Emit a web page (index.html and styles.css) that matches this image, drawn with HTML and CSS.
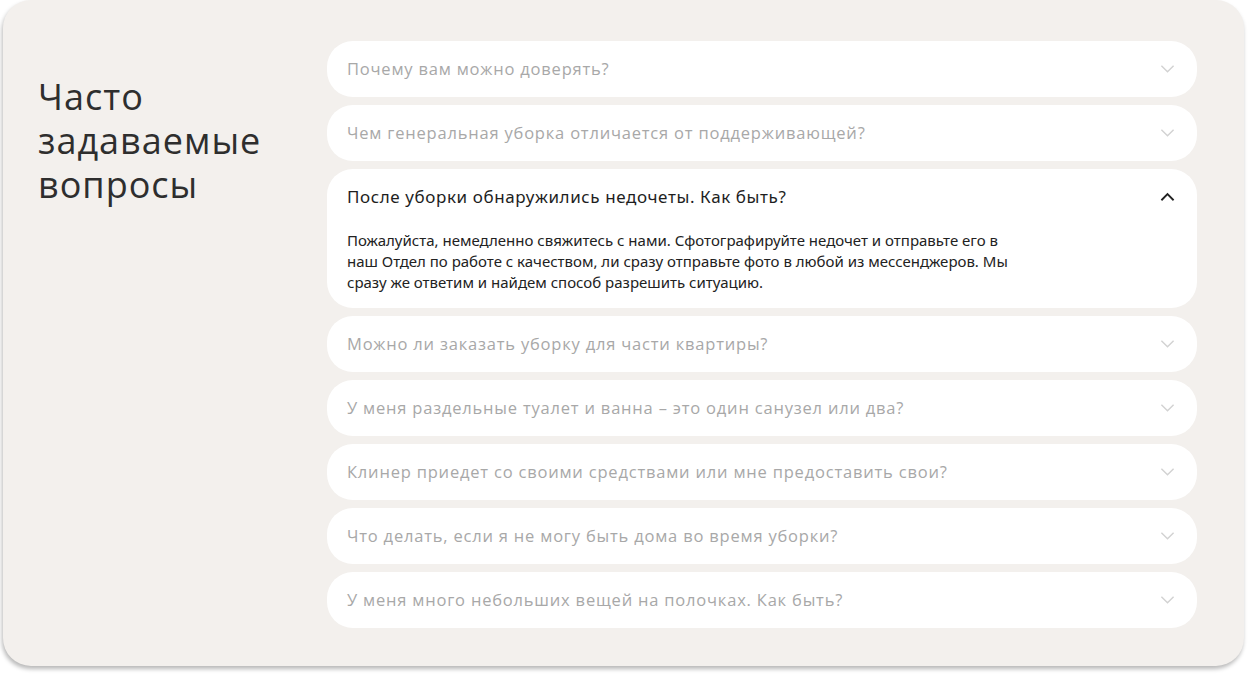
FILE: index.html
```html
<!DOCTYPE html>
<html lang="ru">
<head>
<meta charset="utf-8">
<link rel="stylesheet" href="styles.css">
</head>
<body>
<section class="faq">
  <h2 class="faq-title">Часто<br>задаваемые<br>вопросы</h2>
  <div class="faq-list">
    <div class="item"><div class="q"><span>Почему вам можно доверять?</span><svg class="chev" viewBox="0 0 16 10"><path d="M1.5 1.5 8 8l6.5-6.5"/></svg></div></div>
    <div class="item"><div class="q"><span>Чем генеральная уборка отличается от поддерживающей?</span><svg class="chev" viewBox="0 0 16 10"><path d="M1.5 1.5 8 8l6.5-6.5"/></svg></div></div>
    <div class="item open"><div class="q"><span>После уборки обнаружились недочеты. Как быть?</span><svg class="chev" viewBox="0 0 16 10"><path d="M1.5 8.5 8 2l6.5 6.5"/></svg></div>
      <p class="a">Пожалуйста, немедленно свяжитесь с нами. Сфотографируйте недочет и отправьте его в наш Отдел по работе с качеством, ли сразу отправьте фото в любой из мессенджеров. Мы сразу же ответим и найдем способ разрешить ситуацию.</p></div>
    <div class="item"><div class="q"><span>Можно ли заказать уборку для части квартиры?</span><svg class="chev" viewBox="0 0 16 10"><path d="M1.5 1.5 8 8l6.5-6.5"/></svg></div></div>
    <div class="item"><div class="q"><span>У меня раздельные туалет и ванна – это один санузел или два?</span><svg class="chev" viewBox="0 0 16 10"><path d="M1.5 1.5 8 8l6.5-6.5"/></svg></div></div>
    <div class="item"><div class="q"><span>Клинер приедет со своими средствами или мне предоставить свои?</span><svg class="chev" viewBox="0 0 16 10"><path d="M1.5 1.5 8 8l6.5-6.5"/></svg></div></div>
    <div class="item"><div class="q"><span>Что делать, если я не могу быть дома во время уборки?</span><svg class="chev" viewBox="0 0 16 10"><path d="M1.5 1.5 8 8l6.5-6.5"/></svg></div></div>
    <div class="item"><div class="q"><span>У меня много небольших вещей на полочках. Как быть?</span><svg class="chev" viewBox="0 0 16 10"><path d="M1.5 1.5 8 8l6.5-6.5"/></svg></div></div>
  </div>
</section>
</body>
</html>
```
FILE: styles.css
```css
* { box-sizing: border-box; }
html, body { margin: 0; padding: 0; background: #ffffff; }
body { width: 1248px; height: 675px; overflow: hidden; padding: 0 4px 0 3px; }
.faq {
  display: flex;
  width: 1241px;
  height: 666px;
  background: #f3f0ed;
  border-radius: 28px;
  box-shadow: -1px 3px 4px rgba(0,0,0,0.28);
  padding: 41px 47px 0 35px;
}
.faq-title {
  margin: 0;
  width: 289px;
  flex: none;
  padding-top: 34px;
  font-family: "Open Sans", sans-serif;
  font-weight: 400;
  font-size: 36px;
  line-height: 44px;
  letter-spacing: 1px;
  color: #2e2e2e;
}
.faq-list {
  flex: 1;
  display: flex;
  flex-direction: column;
  gap: 8px;
}
.item {
  background: #ffffff;
  border-radius: 26px;
  padding: 0 22px 0 20px;
}
.q {
  height: 56px;
  display: flex;
  align-items: center;
  justify-content: space-between;
  font-family: "Open Sans", sans-serif;
  font-size: 16.5px;
  letter-spacing: 0.8px;
  color: #a8a8a8;
}
.q span { position: relative; top: -1px; }
.chev {
  width: 15px;
  height: 10px;
  fill: none;
  stroke: #d2d2d2;
  stroke-width: 1.5;
}
.open .q {
  color: #1e1e1e;
  font-family: "Noto Sans", sans-serif;
  font-size: 17px;
  letter-spacing: 0.6px;
}
.open .chev { stroke: #222; stroke-width: 2; }
.a {
  margin: 0;
  padding: 5px 0 15px;
  max-width: 682px;
  font-family: "Noto Sans", sans-serif;
  font-size: 15px;
  line-height: 21px;
  color: #222;
}
```
